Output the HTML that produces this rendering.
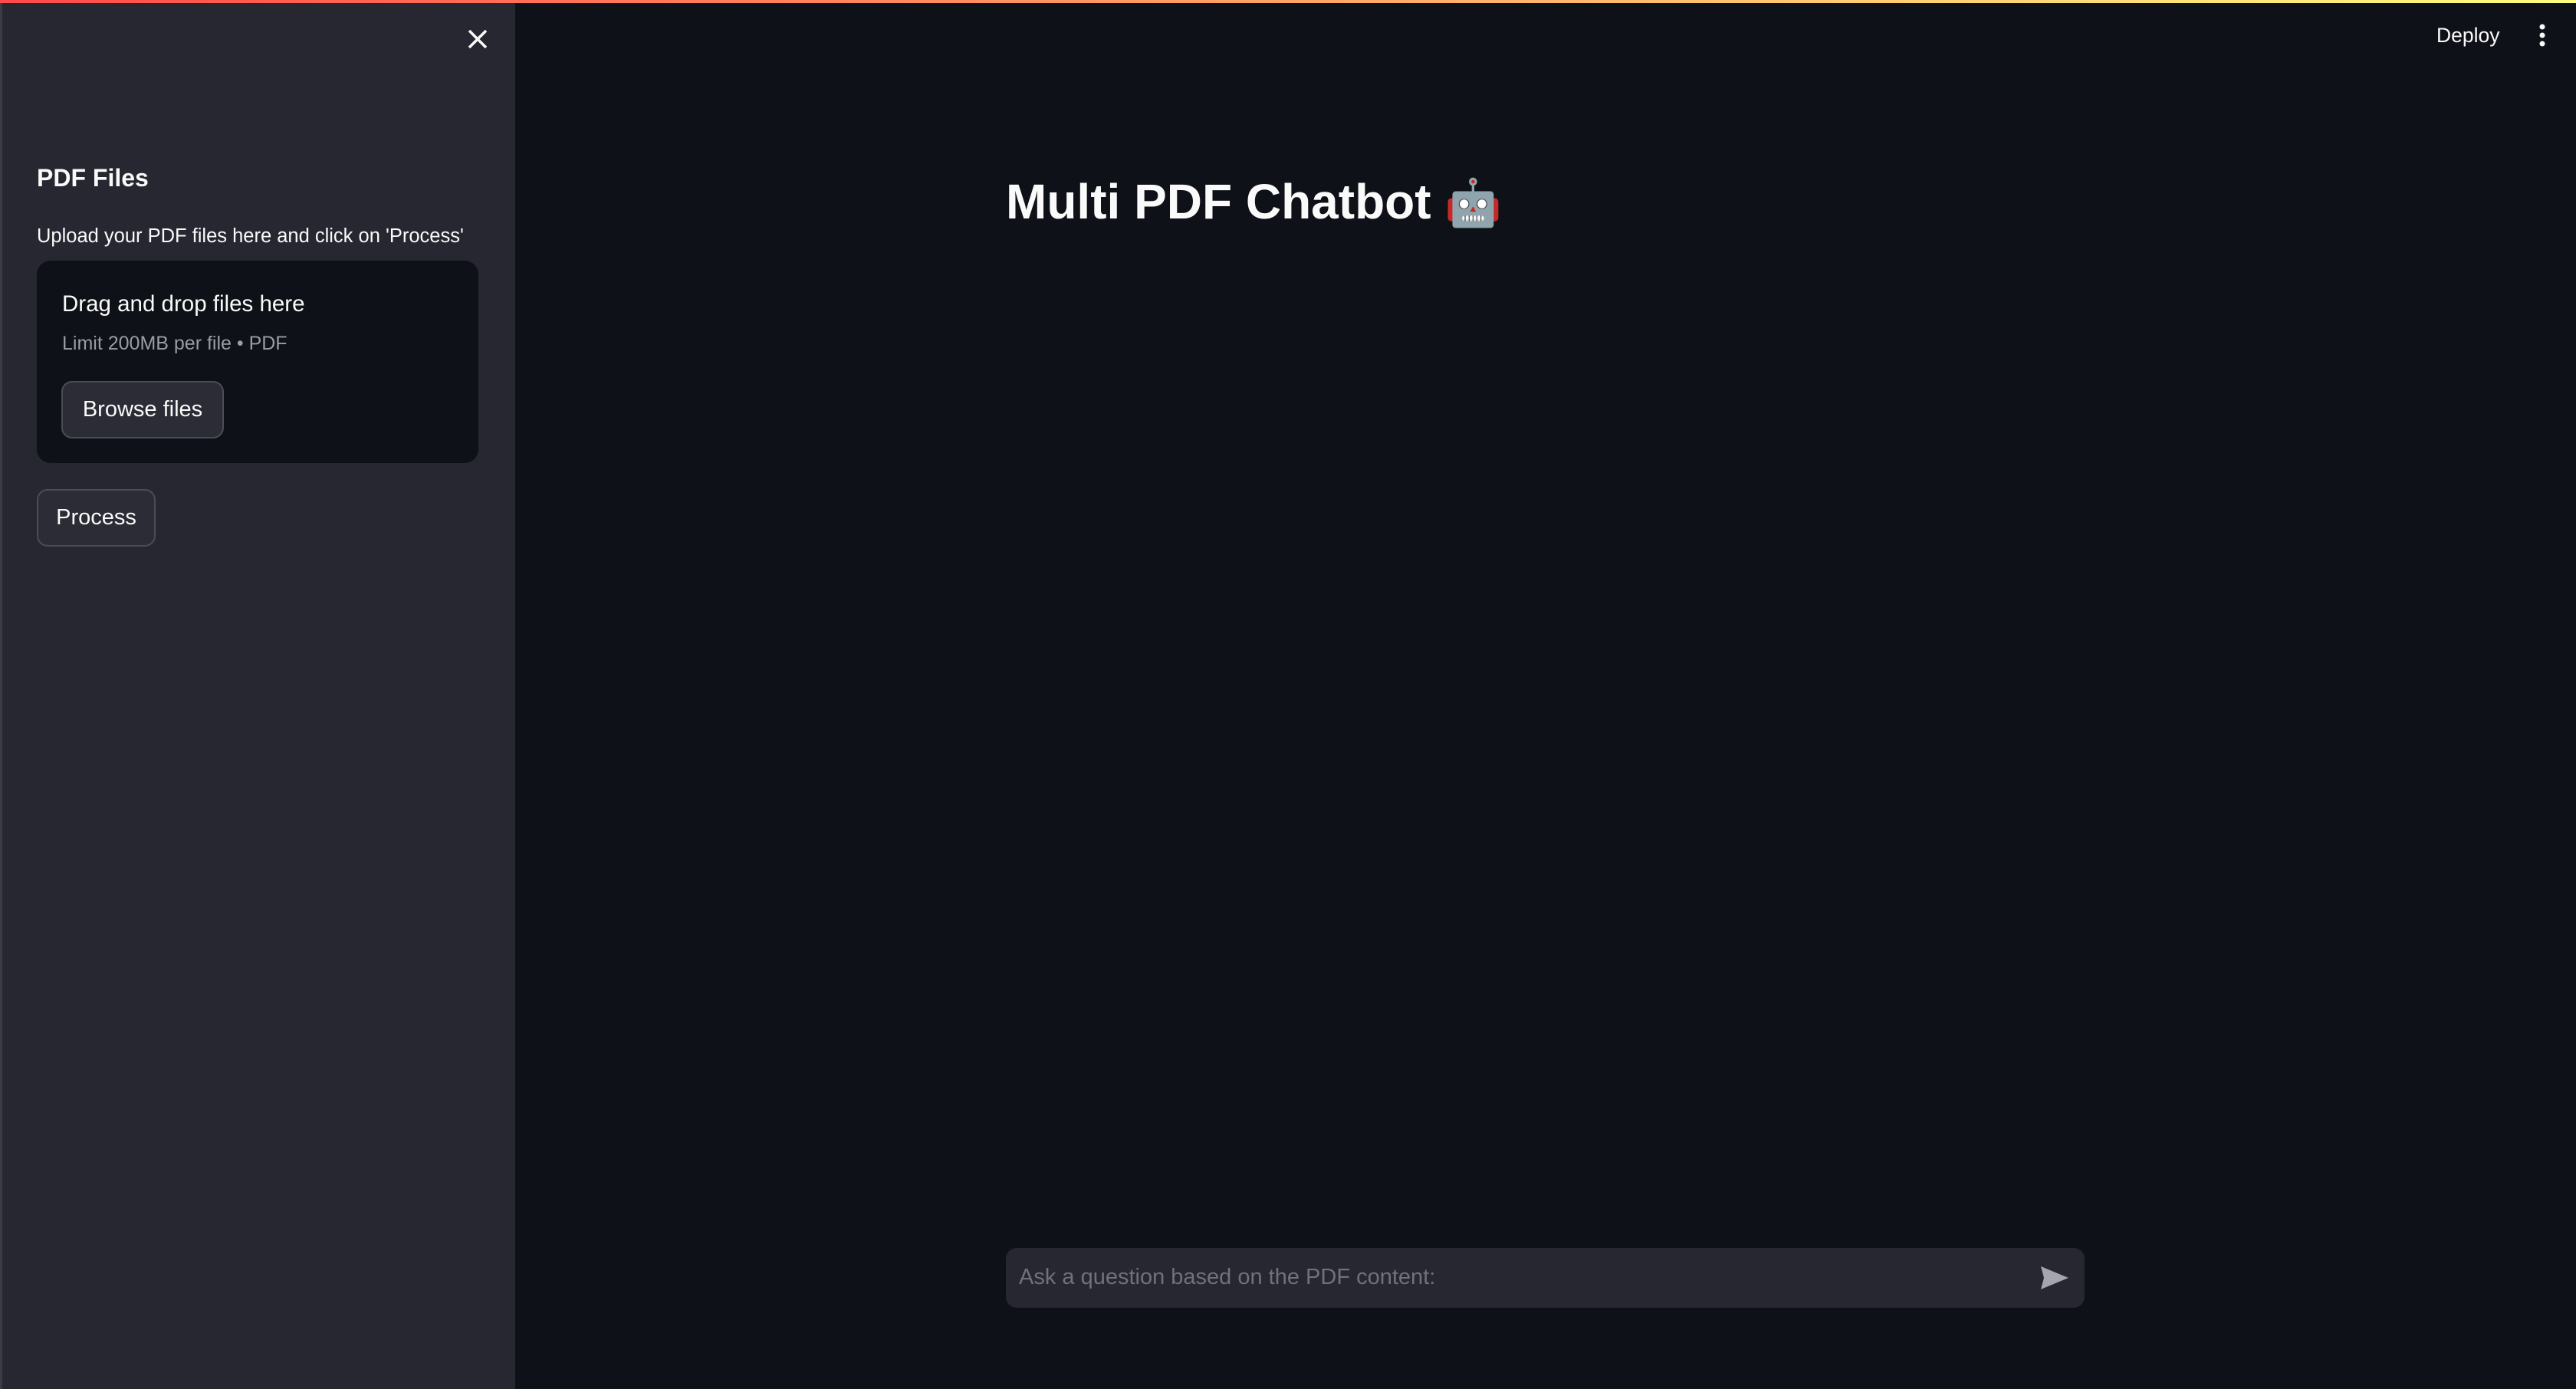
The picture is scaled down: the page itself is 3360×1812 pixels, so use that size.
<!DOCTYPE html>
<html><head><meta charset="utf-8">
<style>
*{margin:0;padding:0;box-sizing:border-box}
html,body{width:3360px;height:1812px;overflow:hidden;background:#0e1117;font-family:"Liberation Sans","DejaVu Sans",sans-serif;color:#fafafa}
.topline{position:absolute;left:0;top:0;width:3360px;height:4px;background:linear-gradient(90deg,#ff4b4b,#fffd80)}
.side{position:absolute;left:0;top:4px;width:672px;height:1808px;background:#262730;border-left:3px solid #3a3b44}
.abs{position:absolute;white-space:nowrap}
.btn{position:absolute;border:2px solid #4b4c57;border-radius:14px;background:#2b2c36;font-size:29px;display:flex;align-items:center;justify-content:center}
</style></head><body>
<div class="topline"></div>
<div class="side"></div>
<svg class="abs" style="left:608px;top:36px" width="30" height="30" viewBox="0 0 30 30"><path d="M4 4L26 26M26 4L4 26" stroke="#fafafa" stroke-width="3.5"/></svg>
<div class="abs" style="left:48px;top:214px;font-size:32px;font-weight:bold">PDF Files</div>
<div class="abs" style="left:48px;top:294px;font-size:25.5px">Upload your PDF files here and click on 'Process'</div>
<div class="abs" style="left:48px;top:340px;width:576px;height:264px;background:#0e1117;border-radius:18px"></div>
<div class="abs" style="left:81px;top:380px;font-size:29.5px">Drag and drop files here</div>
<div class="abs" style="left:81px;top:434px;font-size:25px;color:#9a9ca6">Limit 200MB per file • PDF</div>
<div class="btn" style="left:80px;top:497px;width:212px;height:75px">Browse files</div>
<div class="btn" style="left:48px;top:638px;width:155px;height:75px">Process</div>
<div class="abs" style="left:1312px;top:226px;font-size:64px;font-weight:bold">Multi PDF Chatbot <span style="font-size:60px;font-family:'Noto Color Emoji',sans-serif">🤖</span></div>
<div class="abs" style="left:3178px;top:31px;font-size:26.5px">Deploy</div>
<svg class="abs" style="left:3306px;top:30px" width="20" height="32" viewBox="0 0 20 32"><circle cx="10" cy="5" r="3.5" fill="#fafafa"/><circle cx="10" cy="16" r="3.5" fill="#fafafa"/><circle cx="10" cy="27" r="3.5" fill="#fafafa"/></svg>
<div class="abs" style="left:1312px;top:1628px;width:1407px;height:78px;background:#262730;border-radius:14px"></div>
<div class="abs" style="left:1329px;top:1650px;font-size:29px;color:#6f717b">Ask a question based on the PDF content:</div>
<svg class="abs" style="left:2660px;top:1650px" width="40" height="34" viewBox="0 0 40 34"><path d="M2 2L38 17L2 32L6 17Z" fill="#a3a5b0"/></svg>
</body></html>
